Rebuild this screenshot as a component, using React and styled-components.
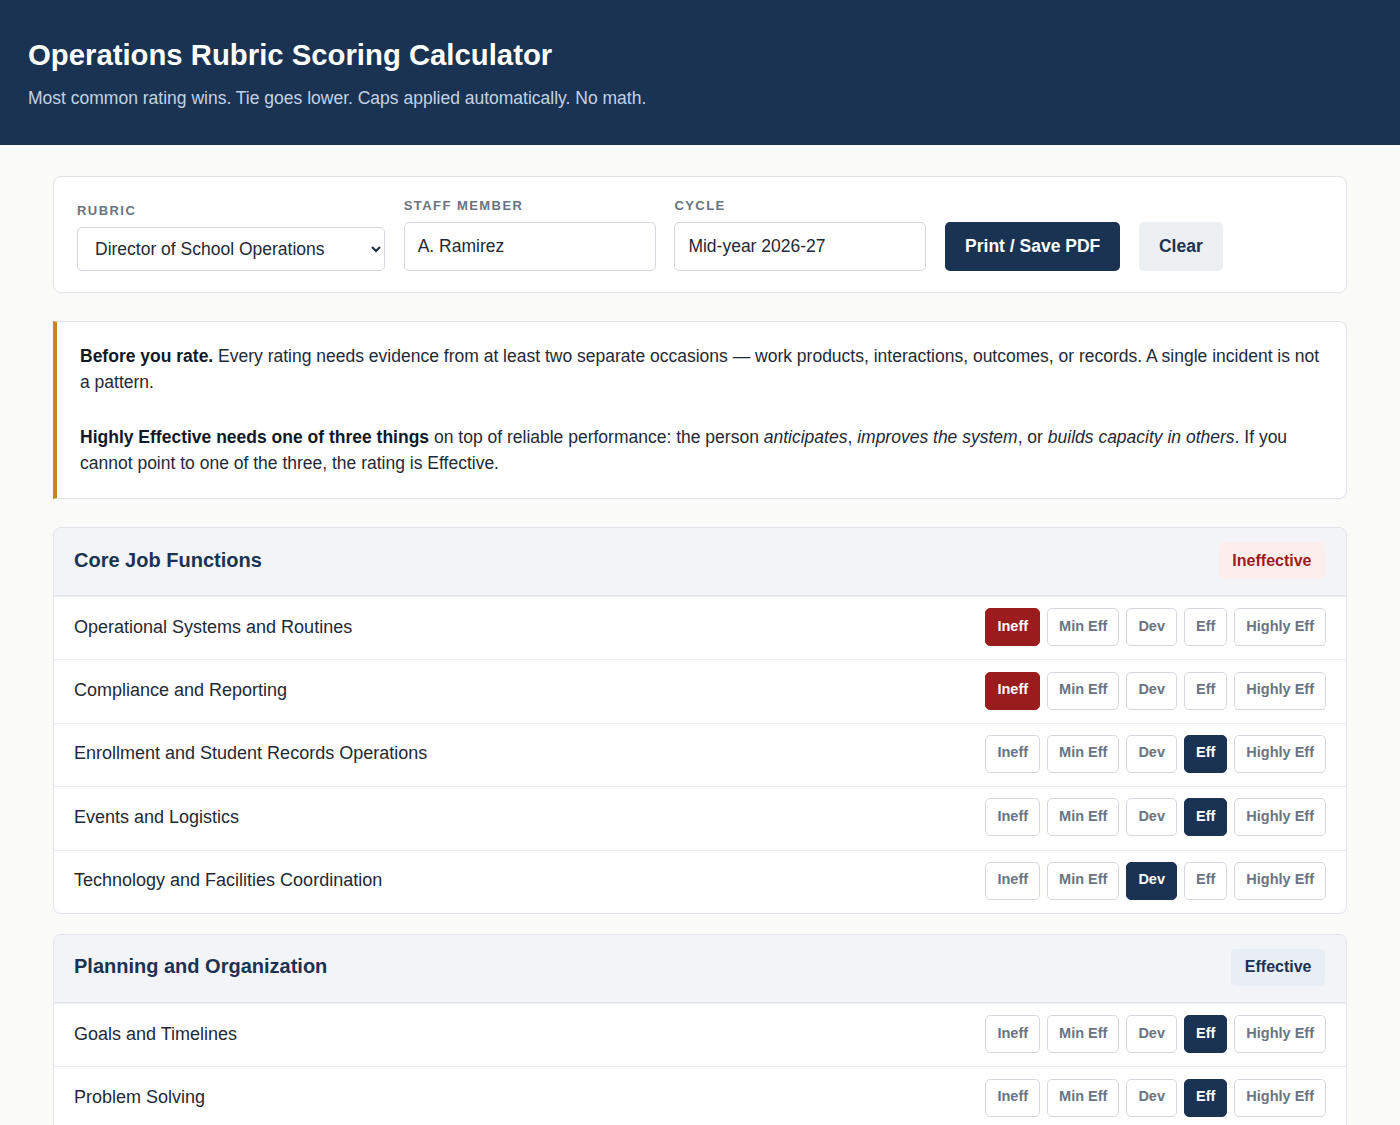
import styled, { createGlobalStyle } from 'styled-components';

const GlobalStyle = createGlobalStyle`
  body {
    margin: 0;
    background: #fafaf8;
    font-family: "Liberation Sans", Arial, sans-serif;
    color: #1f2937;
  }
`;

const Header = styled.header`
  background: #1a3352;
  padding: 37px 28px 0;
  height: 145px;
  box-sizing: border-box;
`;

const Title = styled.h1`
  margin: 0;
  font-size: 29.3px;
  font-weight: 700;
  color: #fff;
  line-height: 36px;
`;

const Subtitle = styled.p`
  margin: 14px 0 0;
  font-size: 17.5px;
  color: #c3d2e6;
  line-height: 22px;
`;

const Main = styled.main`
  max-width: 1294px;
  margin: 0 auto;
  padding: 31px 0 40px;
`;

const Card = styled.section`
  background: #fff;
  border: 1px solid #e1e4e8;
  border-radius: 8px;
`;

const Controls = styled(Card)`
  display: flex;
  align-items: flex-end;
  gap: 18.7px;
  padding: 21px 23px 21px;
  margin-bottom: 28px;
`;

const Field = styled.label`
  display: flex;
  flex-direction: column;
  gap: 9px;
  width: ${(p) => p.$w}px;
`;

const Label = styled.span`
  font-size: 13px;
  font-weight: 700;
  letter-spacing: 1.45px;
  text-transform: uppercase;
  color: #687483;
`;

const Select = styled.select`
  height: 44px;
  padding: 0 10px 0 13px;
  font-family: inherit;
  font-size: 17.5px;
  color: #1f2937;
  background: #fff;
  border: 1px solid #d4d8de;
  border-radius: 5px;
`;

const Input = styled.input`
  height: 49px;
  box-sizing: border-box;
  padding: 0 13px;
  font-family: inherit;
  font-size: 17.5px;
  color: #1f2937;
  border: 1px solid #d4d8de;
  border-radius: 5px;
`;

const Button = styled.button`
  height: 49px;
  padding: 0 ${(p) => (p.$primary ? 20 : 20)}px;
  font-family: inherit;
  font-size: 17.5px;
  font-weight: 700;
  border: none;
  border-radius: 5px;
  background: ${(p) => (p.$primary ? '#1a3352' : '#edf0f3')};
  color: ${(p) => (p.$primary ? '#fff' : '#1a3352')};
`;

const Notice = styled(Card)`
  border-left: 4px solid #c08a1a;
  border-radius: 0 8px 8px 0;
  padding: 21px 24px 22px 23px;
  margin-bottom: 28px;
  font-size: 17.5px;
  line-height: 26px;
  color: #1f2937;

  p {
    margin: 0;
  }
  p + p {
    margin-top: 29px;
  }
  b {
    color: #111827;
  }
`;

const Section = styled(Card)`
  overflow: hidden;
  margin-bottom: 20px;
`;

const SectionHead = styled.div`
  display: flex;
  align-items: center;
  justify-content: space-between;
  height: 67px;
  padding: 0 21px 0 20px;
  background: #f2f4f7;
  border-bottom: 1px solid #e1e4e8;
`;

const SectionTitle = styled.h2`
  margin: 0 0 3px;
  font-size: 20px;
  font-weight: 700;
  color: #1a3352;
`;

const Badge = styled.span`
  padding: 9.5px 13.5px;
  border-radius: 5px;
  font-size: 16px;
  font-weight: 700;
  margin-bottom: 2px;
  background: ${(p) => (p.$tone === 'bad' ? '#fdeeee' : '#e9eef5')};
  color: ${(p) => (p.$tone === 'bad' ? '#9b1c1c' : '#1a3352')};
`;

const Row = styled.div`
  display: flex;
  align-items: center;
  justify-content: space-between;
  height: 62.4px;
  padding: 0 20px 0 20px;
  border-top: 1px solid #eceef1;
  &:first-of-type {
    border-top: none;
  }
`;

const RowLabel = styled.span`
  font-size: 18px;
  color: #1f2937;
  margin-bottom: 2px;
`;

const Choices = styled.div`
  display: flex;
  gap: 7px;
  margin-bottom: 2px;
`;

const Choice = styled.button`
  height: 38px;
  padding: 0 11px 3px;
  font-family: inherit;
  font-size: 14.5px;
  font-weight: 700;
  border-radius: 5px;
  border: 1.5px solid ${(p) => (p.$on ? (p.$red ? '#9b1c1c' : '#1a3352') : '#d4d8de')};
  background: ${(p) => (p.$on ? (p.$red ? '#9b1c1c' : '#1a3352') : '#fff')};
  color: ${(p) => (p.$on ? '#fff' : '#6b7482')};
`;

const LEVELS = ['Ineff', 'Min Eff', 'Dev', 'Eff', 'Highly Eff'];

const sections = [
  {
    title: 'Core Job Functions',
    result: 'Ineffective',
    tone: 'bad',
    rows: [
      ['Operational Systems and Routines', 0],
      ['Compliance and Reporting', 0],
      ['Enrollment and Student Records Operations', 3],
      ['Events and Logistics', 3],
      ['Technology and Facilities Coordination', 2],
    ],
  },
  {
    title: 'Planning and Organization',
    result: 'Effective',
    tone: 'good',
    rows: [
      ['Goals and Timelines', 3],
      ['Problem Solving', 3],
      ['Prioritization', 3],
    ],
  },
];

export default function App() {
  return (
    <>
      <GlobalStyle />
      <Header>
        <Title>Operations Rubric Scoring Calculator</Title>
        <Subtitle>Most common rating wins. Tie goes lower. Caps applied automatically. No math.</Subtitle>
      </Header>
      <Main>
        <Controls>
          <Field $w={308}>
            <Label>Rubric</Label>
            <Select defaultValue="dso">
              <option value="dso">Director of School Operations</option>
            </Select>
          </Field>
          <Field $w={252}>
            <Label>Staff member</Label>
            <Input defaultValue="A. Ramirez" />
          </Field>
          <Field $w={252}>
            <Label>Cycle</Label>
            <Input defaultValue="Mid-year 2026-27" />
          </Field>
          <Button $primary>Print / Save PDF</Button>
          <Button>Clear</Button>
        </Controls>

        <Notice>
          <p>
            <b>Before you rate.</b> Every rating needs evidence from at least two separate occasions — work products,
            interactions, outcomes, or records. A single incident is not a pattern.
          </p>
          <p>
            <b>Highly Effective needs one of three things</b> on top of reliable performance: the person{' '}
            <i>anticipates</i>, <i>improves the system</i>, or <i>builds capacity in others</i>. If you cannot point
            to one of the three, the rating is Effective.
          </p>
        </Notice>

        {sections.map((s) => (
          <Section key={s.title}>
            <SectionHead>
              <SectionTitle>{s.title}</SectionTitle>
              <Badge $tone={s.tone}>{s.result}</Badge>
            </SectionHead>
            {s.rows.map(([name, sel]) => (
              <Row key={name}>
                <RowLabel>{name}</RowLabel>
                <Choices>
                  {LEVELS.map((lv, i) => (
                    <Choice key={lv} $on={i === sel} $red={i === 0}>
                      {lv}
                    </Choice>
                  ))}
                </Choices>
              </Row>
            ))}
          </Section>
        ))}
      </Main>
    </>
  );
}
